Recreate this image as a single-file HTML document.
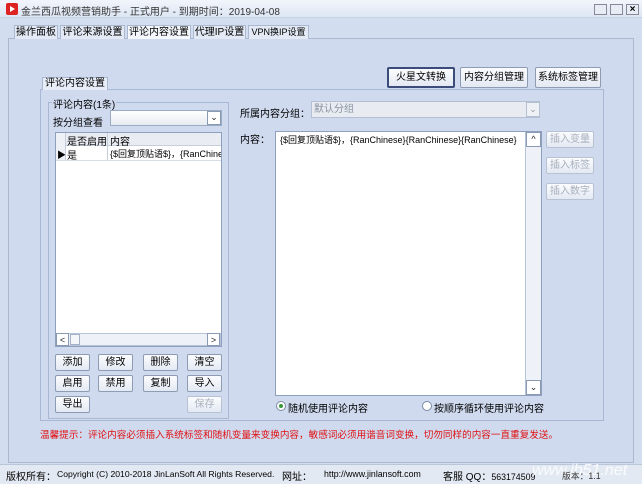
<!DOCTYPE html>
<html><head><meta charset="utf-8">
<style>
*{margin:0;padding:0;box-sizing:border-box}
body{width:642px;height:484px;overflow:hidden;background:#d3ddf0;font-family:"Liberation Sans","Noto Sans CJK SC",sans-serif;font-size:10px;color:#000;position:relative}
.a{position:absolute;white-space:nowrap}
.btn{position:absolute;white-space:nowrap;background:linear-gradient(#fbfcfe,#e3e9f3);border:1px solid #8d9bb3;border-radius:2px;text-align:center;font-size:10px;line-height:15px}
.dis{color:#a8b0bc;border-color:#b8c2d2}
.box{position:absolute;border:1px solid #a9b8d2}
.sb{position:absolute;background:#eef2f8;border:1px solid #b7c3d7}
.arr{position:absolute;width:14px;height:14px;background:#fff;border:1px solid #8a9ab3;font-size:9px;line-height:12px;text-align:center;color:#222}
.tab{position:absolute;top:25px;height:14px;background:#e4eaf5;border:1px solid #aab8d0;border-bottom:none;text-align:center;line-height:13px;font-size:10px}
</style></head><body>
<div class="a" style="left:0;top:0;width:642px;height:18px;background:linear-gradient(#f2f5fb,#dde6f4);border-bottom:1px solid #c8d3e6"></div>
<div class="a" style="left:6px;top:3px;width:12px;height:12px;background:#d22;border-radius:2px"></div>
<div class="a" style="left:10px;top:6px;width:0;height:0;border-left:5px solid #fff;border-top:3px solid transparent;border-bottom:3px solid transparent"></div>
<div class="a" style="left:21px;top:3px;font-size:10px;color:#333">金兰西瓜视频营销助手 - 正式用户 - 到期时间：2019-04-08</div>
<div class="a" style="left:594px;top:4px;width:13px;height:11px;border:1px solid #889;background:#e8edf5"></div>
<div class="a" style="left:610px;top:4px;width:13px;height:11px;border:1px solid #889;background:#e8edf5"></div>
<div class="a" style="left:626px;top:4px;width:13px;height:11px;border:1px solid #889;background:#e8edf5;font-size:10px;line-height:9px;text-align:center;font-weight:bold">×</div>
<!-- tabs -->
<div class="a" style="left:8px;top:38px;width:626px;height:425px;border:1px solid #aab8d0;background:#cfdaef"></div>
<div class="tab" style="left:14px;width:44px">操作面板</div>
<div class="tab" style="left:60px;width:65px">评论来源设置</div>
<div class="tab" style="left:127px;width:64px;background:#f4f7fc">评论内容设置</div>
<div class="tab" style="left:193px;width:53px">代理IP设置</div>
<div class="tab" style="left:248px;width:61px;font-size:9px">VPN换IP设置</div>
<!-- top buttons -->
<div class="btn" style="left:387px;top:67px;width:68px;height:21px;line-height:17px;border:2px solid #3c4c7a">火星文转换</div>
<div class="btn" style="left:460px;top:67px;width:68px;height:21px;line-height:19px">内容分组管理</div>
<div class="btn" style="left:535px;top:67px;width:66px;height:21px;line-height:19px">系统标签管理</div>
<!-- group -->
<div class="box" style="left:40px;top:89px;width:564px;height:332px"></div>
<div class="a" style="left:42px;top:77px;height:13px;background:#e8eef8;border:1px solid #aab8d0;border-bottom:none;padding:0 2px;line-height:12px">评论内容设置</div>
<div class="box" style="left:48px;top:102px;width:181px;height:317px"></div>
<div class="a" style="left:52px;top:96px;background:#cfdaef;padding:0 1px">评论内容(1条)</div>
<div class="a" style="left:53px;top:114px">按分组查看</div>
<div class="a" style="left:110px;top:110px;width:112px;height:16px;border:1px solid #9aabc6;background:linear-gradient(#fff,#e7ebf1)"></div>
<div class="arr" style="left:207px;top:111px;width:14px;height:14px;line-height:11px">⌄</div>
<!-- grid -->
<div class="a" style="left:55px;top:132px;width:167px;height:215px;background:#fff;border:1px solid #8ea0bd"></div>
<div class="a" style="left:56px;top:133px;width:165px;height:13px;background:#e9edf3;border-bottom:1px solid #c6cedb"></div>
<div class="a" style="left:56px;top:133px;width:10px;height:27px;border-right:1px solid #c6cedb;background:#eef1f6"></div>
<div class="a" style="left:107px;top:133px;width:1px;height:27px;background:#c6cedb"></div>
<div class="a" style="left:67px;top:133px">是否启用</div>
<div class="a" style="left:110px;top:133px">内容</div>
<div class="a" style="left:57px;top:148px;font-size:9px">▶</div>
<div class="a" style="left:67px;top:147px">是</div>
<div class="a" style="left:110px;top:147px;width:111px;overflow:hidden;font-size:9px">{$回复顶贴语$}，{RanChinese}</div>
<div class="a" style="left:56px;top:160px;width:165px;height:1px;background:#d7dde7"></div>
<div class="sb" style="left:56px;top:333px;width:165px;height:13px"></div>
<div class="arr" style="left:56px;top:333px;width:13px;height:13px">&lt;</div>
<div class="a" style="left:70px;top:334px;width:10px;height:11px;border:1px solid #a6b2c6;background:#f4f6fa"></div>
<div class="arr" style="left:207px;top:333px;width:13px;height:13px">&gt;</div>
<!-- buttons -->
<div class="btn" style="left:55px;top:354px;width:35px;height:17px">添加</div>
<div class="btn" style="left:98px;top:354px;width:35px;height:17px">修改</div>
<div class="btn" style="left:143px;top:354px;width:35px;height:17px">删除</div>
<div class="btn" style="left:187px;top:354px;width:35px;height:17px">清空</div>
<div class="btn" style="left:55px;top:375px;width:35px;height:17px">启用</div>
<div class="btn" style="left:98px;top:375px;width:35px;height:17px">禁用</div>
<div class="btn" style="left:143px;top:375px;width:35px;height:17px">复制</div>
<div class="btn" style="left:187px;top:375px;width:35px;height:17px">导入</div>
<div class="btn" style="left:55px;top:396px;width:35px;height:17px">导出</div>
<div class="btn dis" style="left:187px;top:396px;width:35px;height:17px">保存</div>
<!-- right -->
<div class="a" style="left:240px;top:105px">所属内容分组：</div>
<div class="a" style="left:311px;top:101px;width:229px;height:17px;border:1px solid #b3bfd2;background:#e8ecf2;color:#8a93a0;padding-left:2px;line-height:15px">默认分组</div>
<div class="arr" style="left:526px;top:102px;height:15px;color:#999;border-color:#b6c0d0;background:#eef1f6">⌄</div>
<div class="a" style="left:240px;top:131px">内容：</div>
<div class="a" style="left:275px;top:131px;width:267px;height:265px;background:#fff;border:1px solid #8ea0bd"></div>
<div class="a" style="left:280px;top:133px;font-size:9px">{$回复顶贴语$}，{RanChinese}{RanChinese}{RanChinese}</div>
<div class="sb" style="left:525px;top:132px;width:16px;height:263px;border-width:0 0 0 1px"></div>
<div class="arr" style="left:526px;top:132px;width:15px;height:15px">^</div>
<div class="arr" style="left:526px;top:380px;width:15px;height:15px">⌄</div>
<div class="btn dis" style="left:546px;top:131px;width:48px;height:17px">插入变量</div>
<div class="btn dis" style="left:546px;top:157px;width:48px;height:17px">插入标签</div>
<div class="btn dis" style="left:546px;top:183px;width:48px;height:17px">插入数字</div>
<div class="a" style="left:276px;top:401px;width:10px;height:10px;border:1px solid #7c8aa3;border-radius:50%;background:#fff"></div>
<div class="a" style="left:279px;top:404px;width:4px;height:4px;border-radius:50%;background:#3a9a3a"></div>
<div class="a" style="left:288px;top:400px">随机使用评论内容</div>
<div class="a" style="left:422px;top:401px;width:10px;height:10px;border:1px solid #7c8aa3;border-radius:50%;background:#fff"></div>
<div class="a" style="left:434px;top:400px">按顺序循环使用评论内容</div>
<div class="a" style="left:40px;top:427px;color:#e01010;font-size:9.6px">温馨提示：评论内容必须插入系统标签和随机变量来变换内容，敏感词必须用谐音词变换，切勿同样的内容一直重复发送。</div>
<!-- status -->
<div class="a" style="left:0;top:464px;width:642px;height:20px;background:#e3e9f3;border-top:1px solid #b9c5d8"></div>
<div class="a" style="left:6px;top:468px">版权所有：</div>
<div class="a" style="left:57px;top:469px;font-size:8.6px">Copyright (C) 2010-2018 JinLanSoft All Rights Reserved.</div>
<div class="a" style="left:282px;top:468px">网址：</div>
<div class="a" style="left:324px;top:469px;font-size:8.8px">http://www.jinlansoft.com</div>
<div class="a" style="left:443px;top:468px">客服 QQ：<span style="font-size:8.8px">563174509</span></div>
<div class="a" style="left:532px;top:462px;font-size:16px;color:#fff;opacity:.85;font-style:italic">www.jb51.net</div>
<div class="a" style="left:562px;top:469px;font-size:8.8px;color:#333">版本：1.1</div>
</body></html>
